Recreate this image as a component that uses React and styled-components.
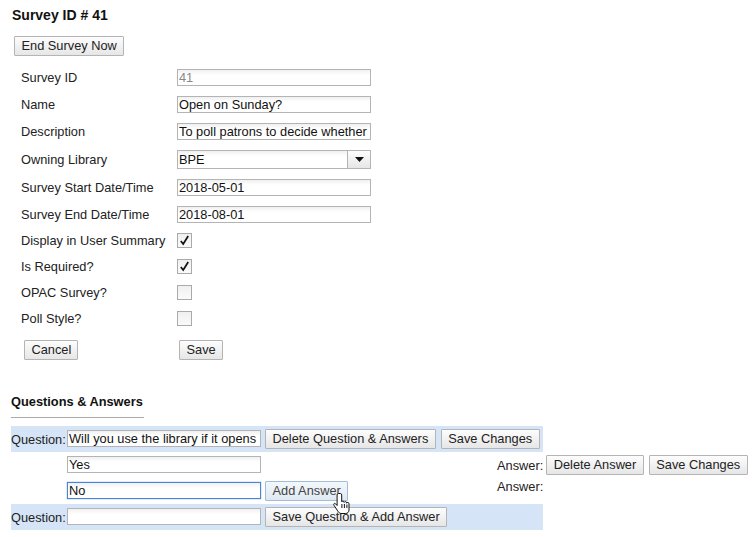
import React from "react";
import styled, { createGlobalStyle } from "styled-components";

const GlobalStyle = createGlobalStyle`
  html, body {
    margin: 0;
    padding: 0;
    background: #fff;
  }
  body {
    font-family: "Liberation Sans", Arial, sans-serif;
    font-size: 12.8px;
    color: #222;
  }
`;

const fields = [
  { label: "Survey ID", value: "41", disabled: true },
  { label: "Name", value: "Open on Sunday?" },
  { label: "Description", value: "To poll patrons to decide whether" },
];

const dates = [
  { label: "Survey Start Date/Time", value: "2018-05-01" },
  { label: "Survey End Date/Time", value: "2018-08-01" },
];

const checks = [
  { label: "Display in User Summary", checked: true },
  { label: "Is Required?", checked: true },
  { label: "OPAC Survey?", checked: false },
  { label: "Poll Style?", checked: false },
];

export default function App() {
  return (
    <Page>
      <GlobalStyle />
      <Title>Survey ID # 41</Title>
      <EndButton>End Survey Now</EndButton>

      <Form>
        {fields.map((f) => (
          <Row key={f.label}>
            <Label>{f.label}</Label>
            <TextInput defaultValue={f.value} disabled={f.disabled} />
          </Row>
        ))}
        <Row $height={29}>
          <Label>Owning Library</Label>
          <Select>
            <SelectValue>BPE</SelectValue>
            <SelectArrow>
              <svg width="9" height="5" viewBox="0 0 9 5">
                <path d="M0 0h9L4.5 5z" fill="#111" />
              </svg>
            </SelectArrow>
          </Select>
        </Row>
        {dates.map((f) => (
          <Row key={f.label}>
            <Label>{f.label}</Label>
            <TextInput defaultValue={f.value} />
          </Row>
        ))}
        <CheckList>
          {checks.map((c) => (
            <Row key={c.label} $height={26}>
              <Label>{c.label}</Label>
              <CheckBox>
                {c.checked && (
                  <svg width="11" height="11" viewBox="0 0 11 11">
                    <path d="M1.8 6l2.4 3L9.2 1" fill="none" stroke="#111" strokeWidth="1.7" />
                  </svg>
                )}
              </CheckBox>
            </Row>
          ))}
        </CheckList>
        <FormActions>
          <CancelButton>Cancel</CancelButton>
          <Button>Save</Button>
        </FormActions>
      </Form>

      <SectionTitle>Questions &amp; Answers</SectionTitle>
      <Rule />

      <QuestionRow>
        <QuestionLabel>Question:</QuestionLabel>
        <RowInput defaultValue="Will you use the library if it opens on Sundays?" />
        <Button>Delete Question &amp; Answers</Button>
        <SaveButton>Save Changes</SaveButton>
      </QuestionRow>

      <AnswerRow>
        <RowInput defaultValue="Yes" />
        <AnswerTail>
          <AnswerLabel>Answer:</AnswerLabel>
          <Button>Delete Answer</Button>
          <SaveButton>Save Changes</SaveButton>
        </AnswerTail>
      </AnswerRow>

      <AnswerRow>
        <FocusedInput defaultValue="No" />
        <HoverButton>
          Add Answer
          <Cursor width="19" height="24" viewBox="0 0 18 24">
            <path
              d="M5 1.5c-.8 0-1.4.6-1.4 1.4v10.6L2.3 12c-.8-.8-1.7-.7-2 0-.2.5 0 1 .3 1.5l3.6 5.4c.9 1.4 1.9 2.6 3.3 2.6h4.7c2 0 3.3-1.6 3.3-3.6v-6.2c0-.8-.6-1.3-1.2-1.3-.5 0-1 .3-1.2.8v-.3c0-.8-.6-1.3-1.2-1.3-.6 0-1.1.3-1.3.8 0-.8-.6-1.3-1.2-1.3-.5 0-1 .3-1.2.7V2.9c0-.8-.6-1.4-1.4-1.4z"
              fill="#fff"
              stroke="#111"
              strokeWidth="1"
            />
            <path d="M8.4 12v4M10.9 12v4M13.4 12.5v3.5" stroke="#111" strokeWidth="1" fill="none" />
          </Cursor>
        </HoverButton>
        <AnswerTail $top>
          <AnswerLabel>Answer:</AnswerLabel>
        </AnswerTail>
      </AnswerRow>

      <QuestionRow>
        <QuestionLabel>Question:</QuestionLabel>
        <RowInput />
        <Button>Save Question &amp; Add Answer</Button>
      </QuestionRow>
    </Page>
  );
}

const Page = styled.div`
  width: 752px;
  height: 537px;
  overflow: hidden;
  padding: 8px 0 0 11px;
  box-sizing: border-box;
`;

const Title = styled.h1`
  margin: 0 0 13px 1px;
  font-size: 14px;
  line-height: 15px;
  font-weight: bold;
  color: #111;
`;

const Button = styled.button`
  height: 20px;
  padding: 0 6.5px;
  box-sizing: border-box;
  flex: none;
  font-family: inherit;
  font-size: 12.8px;
  line-height: 16px;
  color: #222;
  white-space: nowrap;
  border: 1px solid #b4b4b4;
  border-radius: 1px;
  background: linear-gradient(#fdfdfd, #e6e6e6);
`;

const SaveButton = styled(Button)`
  margin-left: 1px;
`;

const EndButton = styled(Button)`
  display: block;
  margin-left: 3px;
  width: 110px;
`;

const HoverButton = styled(Button)`
  position: relative;
  border-color: #a3bcd8;
  background: linear-gradient(#f4f8fc, #dfe8f2);
  color: #444;
`;

const Cursor = styled.svg`
  position: absolute;
  left: 67px;
  top: 10px;
`;

const Form = styled.div`
  margin: 8px 0 0 10px;
`;

const Row = styled.div`
  display: flex;
  align-items: center;
  height: ${(p) => p.$height || 27}px;
`;

const CheckList = styled.div`
  margin-top: -1px;
`;

const Label = styled.span`
  width: 156px;
  flex: none;
`;

const TextInput = styled.input`
  width: 194px;
  height: 17px;
  padding: 0 1px;
  margin: 0;
  box-sizing: border-box;
  flex: none;
  font-family: inherit;
  font-size: 12.8px;
  color: #111;
  border: 1px solid #b4b4b4;
  border-radius: 0;
  outline: none;
  background: linear-gradient(#f0f0f0, #fff 5px);

  &:disabled {
    color: #888;
  }
`;

const RowInput = styled(TextInput)`
  margin-bottom: 1px;
`;

const FocusedInput = styled(RowInput)`
  border-color: #4a86d8;
  box-shadow: 0 0 1px #4a86d8;
`;

const Select = styled.div`
  display: flex;
  width: 194px;
  height: 19px;
  box-sizing: border-box;
  border: 1px solid #b4b4b4;
`;

const SelectValue = styled.div`
  flex: 1;
  padding-left: 1px;
  line-height: 17px;
  color: #111;
  background: linear-gradient(#f0f0f0, #fff 5px);
`;

const SelectArrow = styled.div`
  display: flex;
  align-items: center;
  justify-content: center;
  width: 22px;
  border-left: 1px solid #b4b4b4;
  background: linear-gradient(#fdfdfd, #e6e6e6);
`;

const CheckBox = styled.div`
  display: flex;
  align-items: center;
  justify-content: center;
  width: 15px;
  height: 15px;
  box-sizing: border-box;
  border: 1px solid #aaa;
  background: linear-gradient(#f0f0f0, #fafafa);
`;

const FormActions = styled.div`
  display: flex;
  margin: 9px 0 0 3px;
`;

const CancelButton = styled(Button)`
  width: 54px;
  margin-right: 101px;
`;

const SectionTitle = styled.h2`
  margin: 34px 0 0;
  font-size: 12.8px;
  line-height: 16px;
  font-weight: bold;
  color: #111;
`;

const Rule = styled.div`
  width: 133px;
  height: 1px;
  margin: 7px 0 8px;
  background: #aaa;
`;

const QuestionRow = styled.div`
  display: flex;
  align-items: center;
  gap: 4px;
  width: 532px;
  height: 26px;
  background: #d6e4f7;
`;

const QuestionLabel = styled.span`
  width: 52px;
  flex: none;
  white-space: nowrap;
  color: #222;
`;

const AnswerRow = styled.div`
  display: flex;
  align-items: center;
  gap: 4px;
  width: 736px;
  height: 26px;
  padding-left: 56px;
  box-sizing: border-box;
`;

const AnswerTail = styled.div`
  display: flex;
  align-items: center;
  gap: 4px;
  margin-left: auto;
  width: 250px;
  color: #222;
  transform: ${(p) => (p.$top ? "translateY(-5px)" : "none")};
`;

const AnswerLabel = styled.span`
  margin-right: -1px;
`;
